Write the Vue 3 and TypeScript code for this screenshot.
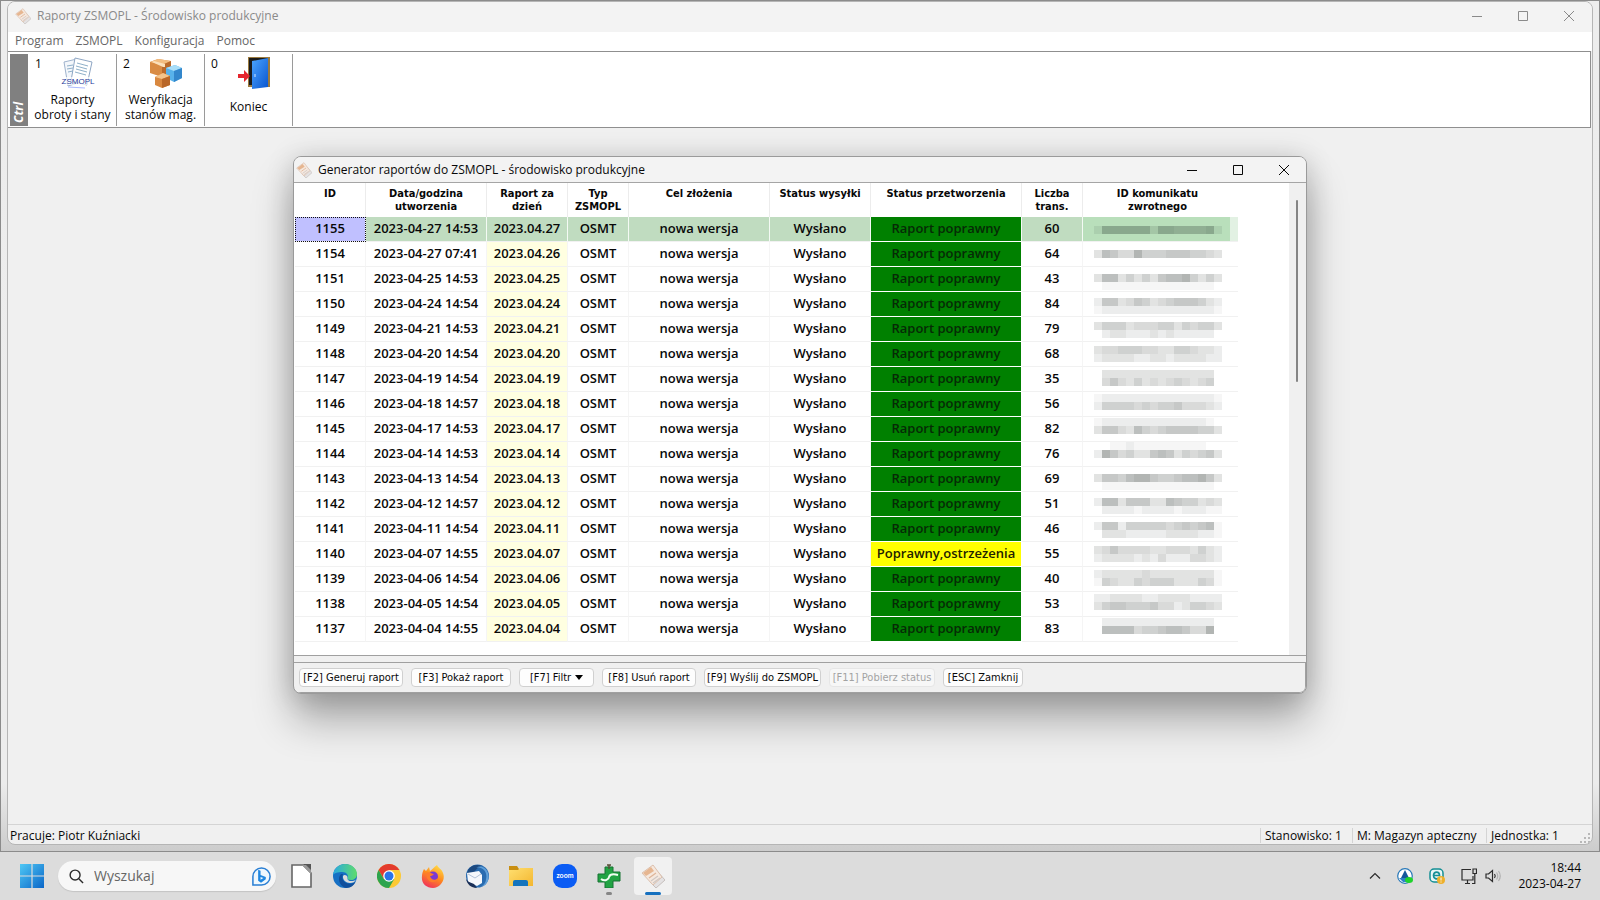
<script setup lang="ts">
interface Report {
  id: number
  created: string
  day: string
  count: number
  warning?: boolean
}

const reports: Report[] = [
  { id: 1155, created: '2023-04-27 14:53', day: '2023.04.27', count: 60 },
  { id: 1154, created: '2023-04-27 07:41', day: '2023.04.26', count: 64 },
  { id: 1151, created: '2023-04-25 14:53', day: '2023.04.25', count: 43 },
  { id: 1150, created: '2023-04-24 14:54', day: '2023.04.24', count: 84 },
  { id: 1149, created: '2023-04-21 14:53', day: '2023.04.21', count: 79 },
  { id: 1148, created: '2023-04-20 14:54', day: '2023.04.20', count: 68 },
  { id: 1147, created: '2023-04-19 14:54', day: '2023.04.19', count: 35 },
  { id: 1146, created: '2023-04-18 14:57', day: '2023.04.18', count: 56 },
  { id: 1145, created: '2023-04-17 14:53', day: '2023.04.17', count: 82 },
  { id: 1144, created: '2023-04-14 14:53', day: '2023.04.14', count: 76 },
  { id: 1143, created: '2023-04-13 14:54', day: '2023.04.13', count: 69 },
  { id: 1142, created: '2023-04-12 14:57', day: '2023.04.12', count: 51 },
  { id: 1141, created: '2023-04-11 14:54', day: '2023.04.11', count: 46 },
  { id: 1140, created: '2023-04-07 14:55', day: '2023.04.07', count: 55, warning: true },
  { id: 1139, created: '2023-04-06 14:54', day: '2023.04.06', count: 40 },
  { id: 1138, created: '2023-04-05 14:54', day: '2023.04.05', count: 53 },
  { id: 1137, created: '2023-04-04 14:55', day: '2023.04.04', count: 83 },
]

const columns: { label: string; cls: string }[] = [
  { label: 'ID', cls: 'c-id' },
  { label: 'Data/godzina utworzenia', cls: 'c-created' },
  { label: 'Raport za dzień', cls: 'c-day' },
  { label: 'Typ ZSMOPL', cls: 'c-type' },
  { label: 'Cel złożenia', cls: 'c-purpose' },
  { label: 'Status wysyłki', cls: 'c-sent' },
  { label: 'Status przetworzenia', cls: 'c-status' },
  { label: 'Liczba trans.', cls: 'c-count' },
  { label: 'ID komunikatu zwrotnego', cls: 'c-msg' },
]

// Masked message numbers: line index on an 8px grid and one darkness digit per block.
const mask: [number, string][] = [
  [1, '2777777377666672'],
  [4, '3764485556665543'],
  [7, '3773535367785353'], [8, '0111111111111110'],
  [10, '2663465345666532'], [11, '1222222222222221'],
  [13, '3555344455354553'], [14, '0233222323222220'],
  [16, '3445554433554332'], [17, '2333322332333322'],
  [19, '0333333333333330'], [20, '0464353434543450'],
  [22, '1222222222222221'], [23, '2555545455644432'],
  [25, '1222222222222210'], [26, '3664375456666553'],
  [28, '0011211111111100'], [29, '2864533676354563'],
  [32, '3665788655677863'], [33, '0111111111111110'],
  [35, '2773666337655343'], [36, '0222212222122211'],
  [38, '2662555554565671'], [39, '0333222223333221'],
  [41, '3464444334443532'], [42, '2333323242224432'],
  [44, '2333334333333331'], [45, '1543354555333541'],
  [47, '2233332233332222'], [48, '3566555644235543'],
  [50, '0222222222222220'], [51, '0777745567764480'],
]

const blocks = mask.flatMap(([line, digits]) =>
  digits.split('').map((d, i) => ({ x: i * 8, y: line * 8, alpha: parseInt(d, 16) * 0.04 })),
)

const actions: { label: string; cls: string; disabled?: boolean; arrow?: boolean }[] = [
  { label: '[F2] Generuj raport', cls: 'w-f2' },
  { label: '[F3] Pokaż raport', cls: 'w-f3' },
  { label: '[F7] Filtr', cls: 'w-f7', arrow: true },
  { label: '[F8] Usuń raport', cls: 'w-f8' },
  { label: '[F9] Wyślij do ZSMOPL', cls: 'w-f9' },
  { label: '[F11] Pobierz status', cls: 'w-f11', disabled: true },
  { label: '[ESC] Zamknij', cls: 'w-esc' },
]
</script>

<template>
  <div class="screen">
    <svg class="defs" width="0" height="0" aria-hidden="true">
      <defs>
        <linearGradient id="gWin" x1="0" y1="0" x2="1" y2="1">
          <stop offset="0" stop-color="#4fc8f5" /><stop offset="1" stop-color="#0a66c8" />
        </linearGradient>
        <linearGradient id="gDoor" x1="0" y1="0" x2="1" y2="1">
          <stop offset="0" stop-color="#4aa4ff" /><stop offset="1" stop-color="#0a55cf" />
        </linearGradient>
        <linearGradient id="gEdge" x1="0" y1="0" x2="1" y2="0">
          <stop offset="0" stop-color="#2aa9e0" /><stop offset="1" stop-color="#5fdc6c" />
        </linearGradient>
        <linearGradient id="gFox" x1="0.8" y1="0" x2="0.3" y2="1">
          <stop offset="0" stop-color="#ffe14a" /><stop offset="0.5" stop-color="#ff8a1e" /><stop offset="1" stop-color="#f0315c" />
        </linearGradient>
        <linearGradient id="gFolder" x1="0" y1="0" x2="1" y2="1">
          <stop offset="0" stop-color="#ffdf70" /><stop offset="1" stop-color="#f3b62f" />
        </linearGradient>
        <symbol id="app-icon" viewBox="0 0 24 24">
          <path d="M15 6L24 16L15 24L9 18Z" fill="#e4e2e3" stroke="#c6bfbd" />
          <path d="M1 9L12 1L21 13L12 21Z" fill="#f5e8de" stroke="#dcc0ad" />
          <path d="M2 9L10 3L13 7L5 12Z" fill="#e6b691" />
          <path d="M8 14L15 9" stroke="#dfb497" stroke-width="1.2" />
          <path d="M10 17L17 12M12 19L19 14" stroke="#cfc7c4" stroke-width="1.2" />
        </symbol>
      </defs>
    </svg>

    <div class="desktop">
      <main class="main-window">
        <header class="titlebar inactive">
          <svg class="title-icon"><use href="#app-icon" /></svg>
          <h1>Raporty ZSMOPL - Środowisko produkcyjne</h1>
          <div class="win-controls">
            <button type="button" aria-label="Minimalizuj"><svg viewBox="0 0 12 12"><path d="M1 6.5H11" /></svg></button>
            <button type="button" aria-label="Maksymalizuj"><svg viewBox="0 0 12 12"><path d="M1.5 1.5H10.5V10.5H1.5Z" /></svg></button>
            <button type="button" aria-label="Zamknij"><svg viewBox="0 0 12 12"><path d="M1 1L11 11M11 1L1 11" /></svg></button>
          </div>
        </header>
        <nav class="menu">
          <button type="button">Program</button>
          <button type="button">ZSMOPL</button>
          <button type="button">Konfiguracja</button>
          <button type="button">Pomoc</button>
        </nav>
        <div class="toolbar">
          <div class="ctrl"><span>Ctrl</span></div>
          <button type="button" class="tool">
            <span class="num">1</span>
            <svg viewBox="0 0 32 32">
              <path d="M2 5L15 2L19 25L6 29Z" fill="#f4f7fb" stroke="#9fb3cd" />
              <path d="M13 1L30 5L25 28L9 24Z" fill="#fff" stroke="#8ea6c4" />
              <path d="M15 6L26 9M14 9L25 12M14 12L25 15M13 15L24 18M5 9L11 8M5 12L11 11M6 15L11 14" stroke="#8fb0c9" fill="none" />
              <path d="M0 20H32V28H0Z" fill="#fff" fill-opacity="0.7" />
              <text x="16" y="27" text-anchor="middle" class="icon-text">ZSMOPL</text>
              <path d="M6 30L23 31" stroke="#aab9ff" />
            </svg>
            <span class="caption">Raporty<br />obroty i stany</span>
          </button>
          <button type="button" class="tool">
            <span class="num">2</span>
            <svg viewBox="0 0 34 32">
              <path d="M1 5L9 2L22 4L22 17L13 20L1 16Z" fill="#d98b43" />
              <path d="M1 5L9 2L22 4L13 8Z" fill="#f2bd81" />
              <path d="M13 8L22 4V17L13 20Z" fill="#b96a2c" />
              <path d="M5 4L16 7L16 10L14 10L3 5Z" fill="#fbe0bb" />
              <path d="M17 11L26 8L33 11L33 21L25 25L17 21Z" fill="#58b2ea" />
              <path d="M17 11L26 8L33 11L25 14Z" fill="#a9def8" />
              <path d="M25 14L33 11V21L25 25Z" fill="#3387cc" />
              <path d="M6 20L14 16L21 19L21 28L13 31L6 28Z" fill="#d98840" />
              <path d="M6 20L14 16L21 19L13 22Z" fill="#f4c48b" />
              <path d="M13 22L21 19V28L13 31Z" fill="#b96729" />
            </svg>
            <span class="caption">Weryfikacja<br />stanów mag.</span>
          </button>
          <button type="button" class="tool exit">
            <span class="num">0</span>
            <svg viewBox="0 0 32 32">
              <path d="M10 0H32V30H27V3H14V30H10Z" fill="#9b7a3e" />
              <path d="M11 1H30V28H11Z" fill="#1b1b1b" />
              <path d="M14 4L30 1V30L14 32Z" fill="url(#gDoor)" />
              <path d="M17 17L17 20" stroke="#cfe5ff" />
              <path d="M0 17H6V13L12 19L6 25V21H0Z" fill="#e5252d" />
            </svg>
            <span class="caption">Koniec</span>
          </button>
        </div>
        <div class="workspace"></div>
        <footer class="statusbar">
          <span class="user">Pracuje: Piotr Kuźniacki</span>
          <span class="cell s1">Stanowisko: 1</span>
          <span class="cell s2">M: Magazyn apteczny</span>
          <span class="cell s3">Jednostka: 1</span>
          <svg class="grip" viewBox="0 0 12 12"><path d="M8 1h2v2H8zM8 5h2v2H8zM8 9h2v2H8zM4 5h2v2H4zM4 9h2v2H4zM0 9h2v2H0z" /></svg>
        </footer>
      </main>

      <section class="dialog" role="dialog" aria-labelledby="dlg-title">
        <header class="titlebar">
          <svg class="title-icon"><use href="#app-icon" /></svg>
          <h2 id="dlg-title">Generator raportów do ZSMOPL - środowisko produkcyjne</h2>
          <div class="win-controls">
            <button type="button" aria-label="Minimalizuj"><svg viewBox="0 0 12 12"><path d="M1 6.5H11" /></svg></button>
            <button type="button" aria-label="Maksymalizuj"><svg viewBox="0 0 12 12"><path d="M1.5 1.5H10.5V10.5H1.5Z" /></svg></button>
            <button type="button" aria-label="Zamknij"><svg viewBox="0 0 12 12"><path d="M1 1L11 11M11 1L1 11" /></svg></button>
          </div>
        </header>
        <div class="grid-area">
          <div class="table-wrap">
            <table>
              <thead>
                <tr>
                  <th v-for="c in columns" :key="c.cls" :class="c.cls" scope="col">{{ c.label }}</th>
                </tr>
              </thead>
              <tbody>
                <tr v-for="(r, i) in reports" :key="r.id" :class="{ current: i === 0 }">
                  <td class="c-id">{{ r.id }}</td>
                  <td>{{ r.created }}</td>
                  <td class="c-day">{{ r.day }}</td>
                  <td>OSMT</td>
                  <td>nowa wersja</td>
                  <td>Wysłano</td>
                  <td class="c-status" :class="{ warn: r.warning }">{{ r.warning ? 'Poprawny,ostrzeżenia' : 'Raport poprawny' }}</td>
                  <td>{{ r.count }}</td>
                  <td class="c-msg"></td>
                </tr>
              </tbody>
            </table>
            <svg class="mask" viewBox="0 0 128 424" shape-rendering="crispEdges" aria-hidden="true">
              <rect v-for="(b, i) in blocks" :key="i" :x="b.x" :y="b.y" width="8" height="8" fill="#101814" :fill-opacity="b.alpha" />
            </svg>
          </div>
          <div class="scroll"><span></span></div>
        </div>
        <div class="actions">
          <button v-for="a in actions" :key="a.cls" type="button" :class="a.cls" :disabled="a.disabled">
            {{ a.label }}<svg v-if="a.arrow" viewBox="0 0 8 5"><path d="M0 0H8L4 5Z" /></svg>
          </button>
        </div>
      </section>
    </div>

    <footer class="taskbar">
      <button type="button" class="start" aria-label="Start">
        <svg viewBox="0 0 24 24"><path d="M0 0H11.4V11.4H0ZM12.6 0H24V11.4H12.6ZM0 12.6H11.4V24H0ZM12.6 12.6H24V24H12.6Z" fill="url(#gWin)" /></svg>
      </button>
      <label class="search">
        <svg class="lens" viewBox="0 0 16 16"><circle cx="6.5" cy="6.5" r="5.3" /><path d="M10.5 10.5L15 15" /></svg>
        <input type="text" placeholder="Wyszukaj" aria-label="Wyszukaj" />
        <svg class="bing" viewBox="0 0 22 22">
          <path d="M2 20V11A9 9 0 1 1 11 20Z" fill="#eef7fd" stroke="#2a7fd4" stroke-width="1.6" />
          <path d="M7.500 4L10 5V9.500L15.500 11.500V14L10.500 17.500L7.500 15.500ZM10 11.500V14.500L13 12.700Z" fill="#1e86e0" fill-rule="evenodd" />
        </svg>
      </label>
      <div class="apps">
        <button type="button" aria-label="LibreOffice">
          <svg viewBox="0 0 24 24"><path d="M3 1H14L22 9V23H3Z" fill="#fff" stroke="#666" stroke-width="1.6" /><path d="M14 0H22V8Z" fill="#555" /><path d="M13 1L22 10V6L17 1Z" fill="#999" /></svg>
        </button>
        <button type="button" aria-label="Microsoft Edge">
          <svg viewBox="0 0 24 24">
            <circle cx="12" cy="12" r="12" fill="#1670c4" />
            <path d="M0 11C1 4 6 0 12 0C19 0 24 5 24 10C24 14 21 16 18 16C15 16 14 15 14.500 14C16 11 13 8 9.500 8C5 8 1 9 0 11Z" fill="url(#gEdge)" />
            <path d="M8 10C4 14 6 22 13 24C18 24 21 21 22.500 18C18 21 12 20 10 16C9 14 9 12 10 10Z" fill="#114f9c" />
            <path d="M10 12C11 10 14 11 14.500 13C14 15 15 17 18 17C20 17 22 16.500 23 15.500C22 18 20 19 17 19C13 19 9.500 16 10 12Z" fill="#dcdcdc" />
          </svg>
        </button>
        <button type="button" aria-label="Google Chrome">
          <svg viewBox="0 0 24 24">
            <circle cx="12" cy="12" r="12" fill="#fcc934" />
            <path d="M1.600 6A12 12 0 0 1 22.400 6H12L6.800 15Z" fill="#e33b2e" />
            <path d="M1.600 6A12 12 0 0 0 12 24L17.200 15H6.800Z" fill="#2da44e" />
            <circle cx="12" cy="12" r="5.800" fill="#fff" /><circle cx="12" cy="12" r="4.500" fill="#2a74e8" />
          </svg>
        </button>
        <button type="button" aria-label="Firefox">
          <svg viewBox="0 0 24 24">
            <path d="M3 5L5 7L8 3L9 7C12 5 13 3 16 1C17 4 21 5 22 9C25 16 19 24 12 24C5 24 0 19 1 12C1 9 2 7 3 5Z" fill="url(#gFox)" />
            <circle cx="12" cy="12.500" r="5" fill="#7a3ad4" />
            <path d="M5 9C8 7 10 10 13 10C11 12 10 12 9 12C10 16 14 17 17 14C17 19 8 20 6 14Z" fill="#ff7b2a" />
          </svg>
        </button>
        <button type="button" aria-label="Thunderbird">
          <svg viewBox="0 0 24 24">
            <circle cx="12.500" cy="12" r="11.500" fill="#2a6cb0" />
            <path d="M3 6C6 1 12 0 17 2C13 3 11 5 9 9L2 11Z" fill="#1d4a80" />
            <path d="M11 4C17 2 23 8 21 15C21 19 18 22 15 23C22 22 25 15 23 9C21 3 15 1 11 4Z" fill="#5f9fd8" />
            <path d="M2 9L14 7L17 11V19L12 22L3 18Z" fill="#f5f8fc" />
            <path d="M3 10L10 14L16 10" fill="none" stroke="#b3c3d9" />
            <path d="M1 15L4 18L9 20L12 24C6 24 2 20 1 15Z" fill="#1a2f57" />
          </svg>
        </button>
        <button type="button" aria-label="Eksplorator plików">
          <svg viewBox="0 0 24 24">
            <path d="M0 2H8L10 5V10H0Z" fill="#c98f12" /><path d="M0 6H9L11 4H24V22H0Z" fill="url(#gFolder)" />
            <path d="M4 18Q4 16 6 16H17Q19 16 19 18V22H4Z" fill="#1474bd" />
          </svg>
        </button>
        <button type="button" aria-label="Zoom">
          <svg viewBox="0 0 24 24"><rect width="24" height="24" rx="9" fill="#0b5cf4" /><text x="12" y="14" text-anchor="middle" class="zoom-text">zoom</text></svg>
        </button>
        <button type="button" class="running" aria-label="Apteka">
          <svg viewBox="0 0 24 24">
            <path d="M8 3H16V8H23V17H16V24H8V18H1V10H8Z" fill="#21a343" stroke="#167332" />
            <path d="M4 15C8 18 12 15 12 13C13 10 17 10 21 11" fill="none" stroke="#f1fff2" stroke-width="2" />
            <path d="M10 1L14 1M12 1V5" stroke="#574c35" stroke-width="1.400" />
          </svg>
        </button>
        <button type="button" class="active" aria-label="Raporty ZSMOPL"><svg><use href="#app-icon" /></svg></button>
      </div>
      <div class="tray">
        <button type="button" class="chev" aria-label="Pokaż ukryte ikony"><svg viewBox="0 0 12 12"><path d="M1 8.500L6 3.500L11 8.500" /></svg></button>
        <svg class="t16" viewBox="0 0 16 16">
          <circle cx="8" cy="8" r="7.300" fill="#fff" stroke="#2878b8" stroke-width="1.200" />
          <path d="M8 2L12 10H4Z" fill="#15579b" /><path d="M2 10H13L10 14H6Z" fill="#2d83c5" /><ellipse cx="12" cy="12" rx="4" ry="3" fill="#1fd32c" />
        </svg>
        <svg class="t16" viewBox="0 0 16 16">
          <rect x="1" y="1" width="13" height="13" rx="4" fill="#e8f6f6" stroke="#148f94" stroke-width="1.500" />
          <path d="M4.500 7.500H10.500C10.500 3 4.500 3 4.500 7.500C4.500 11 8 11.500 10 10" fill="none" stroke="#148f94" stroke-width="1.700" />
          <circle cx="12" cy="12" r="4" fill="#eeb02b" /><path d="M12 9.500V12.500M12 13.500V14.500" stroke="#fff" />
        </svg>
        <svg class="net" viewBox="0 0 16 16"><path d="M10 1.500H1V12H12V8M4 15.500H9M6.500 12V15.500M12 1H15.500V5.500H12ZM13.800 5.500V15.500H11" /></svg>
        <svg class="vol" viewBox="0 0 16 16"><path d="M1 6H3.500L7.500 2.500V13.500L3.500 10H1Z" /><path d="M9.500 6Q11 8 9.500 10" /><path class="faint" d="M11.500 4.500Q14 8 11.500 11.500M13.500 3Q17 8 13.500 13" /></svg>
        <div class="clock"><time>18:44</time><time>2023-04-27</time></div>
      </div>
    </footer>
  </div>
</template>

<style>
body {
  margin: 0;
}
</style>

<style scoped>
* {
  box-sizing: border-box;
}
.screen {
  --ui: "Open Sans", "Noto Sans", sans-serif;
  height: 100vh;
  min-height: 800px;
  display: flex;
  flex-direction: column;
  font: 12px/15px var(--ui);
  color: #080808;
  overflow: hidden;
}
.defs {
  position: absolute;
}
button {
  font: inherit;
  color: inherit;
  border: 0;
  padding: 0;
  background: none;
}
h1,
h2 {
  margin: 0;
  font: inherit;
}
.desktop {
  flex: 1;
  position: relative;
  display: flex;
  background: linear-gradient(#ededed, #ececec 92%, #cccccc);
  border: 1px solid #8b8b8b;
  padding: 0 6px 6px;
}
.main-window {
  flex: 1;
  display: flex;
  flex-direction: column;
  background: #f0f0f0;
  border: 1px solid #b5b5b5;
  border-radius: 8px;
  overflow: hidden;
}
.titlebar {
  display: flex;
  align-items: center;
  height: 25px;
  padding-left: 2px;
  background: #f3f3f3;
}
.titlebar.inactive {
  height: 30px;
  padding: 0 0 3px 7px;
  color: #8a8a8a;
}
.title-icon {
  width: 16px;
  height: 16px;
  margin-right: 6px;
}
.titlebar h1,
.titlebar h2 {
  flex: 1;
}
.win-controls {
  display: flex;
}
.win-controls button {
  width: 46px;
  height: 24px;
  display: grid;
  place-items: center;
}
.dialog .win-controls {
  margin-right: -1px;
}
.win-controls svg {
  width: 12px;
  height: 12px;
  fill: none;
  stroke: currentColor;
}
.menu {
  display: flex;
  align-items: flex-start;
  gap: 12px;
  height: 19px;
  padding: 1px 0 0 7px;
  background: #fff;
  color: #666;
}
.toolbar {
  display: flex;
  height: 77px;
  background: #fff;
  border: 1px solid #8f8f8f;
  border-left: 0;
  padding: 2px 1px 1px 2px;
  margin-right: 1px;
}
.ctrl {
  width: 18px;
  margin-right: 1px;
  background: #808080;
  display: flex;
  align-items: flex-end;
  justify-content: center;
}
.ctrl span {
  writing-mode: vertical-rl;
  rotate: 180deg;
  color: #fff;
  font: italic bold 12px/16px var(--ui);
  padding-top: 3px;
}
.tool {
  width: 88px;
  display: grid;
  grid-template-columns: 26px 1fr;
  grid-template-rows: 36px auto;
  align-content: start;
  border-right: 1px solid #9a9a9a;
  padding-top: 2px;
}
.num {
  padding-left: 6px;
  text-align: left;
  line-height: 16px;
}
.tool svg {
  width: 34px;
  height: 32px;
  margin: 1px 0 0 6px;
}
.caption {
  grid-column: 1 / -1;
  text-align: center;
}
.exit .caption {
  padding-top: 7px;
}
.icon-text {
  font: 8px "Liberation Sans", sans-serif;
  fill: #283a9a;
}
.workspace {
  flex: 1;
}
.statusbar {
  display: flex;
  align-items: center;
  height: 20px;
  border-top: 1px solid #d4d4d4;
  padding: 2px 0 0 2px;
}
.user {
  flex: 1;
}
.cell {
  border-left: 1px solid #d4d4d4;
  padding-left: 4px;
}
.s1 {
  width: 92px;
}
.s2 {
  width: 134px;
}
.s3 {
  width: 94px;
}
.grip {
  width: 12px;
  height: 12px;
  fill: #b8b8b8;
  align-self: flex-end;
}
.dialog {
  position: absolute;
  left: 292px;
  right: 292px;
  top: 155px;
  background: #f0f0f0;
  border: 1px solid #9a9a9a;
  border-radius: 8px;
  overflow: hidden;
  box-shadow: 0 26px 40px rgba(0, 0, 0, 0.3), 0 2px 28px rgba(0, 0, 0, 0.16);
}
.grid-area {
  display: flex;
  background: #fff;
  border-top: 1px solid #a5a5a5;
  border-bottom: 1px solid #a0a0a0;
}
.table-wrap {
  position: relative;
  flex: 1;
  padding: 0 0 13px 1px;
}
table {
  border-collapse: separate;
  border-spacing: 0;
  table-layout: fixed;
  width: 943px;
}
th {
  height: 34px;
  padding: 4px 6px 0;
  vertical-align: top;
  font: bold 11px/13px "DejaVu Sans Condensed", "DejaVu Sans", sans-serif;
  border-right: 1px solid #ececec;
}
td {
  height: 25px;
  padding: 0 0 2px;
  text-align: center;
  font: 600 13px/22px var(--ui);
  border-right: 1px solid #f5f5f5;
  border-bottom: 1px solid #f1f1f1;
}
.c-id {
  width: 71px;
}
.c-created {
  width: 121px;
}
.c-day {
  width: 81px;
}
.c-type {
  width: 61px;
}
.c-purpose {
  width: 141px;
}
.c-sent {
  width: 101px;
}
.c-status {
  width: 151px;
}
.c-count {
  width: 61px;
}
th.c-sent,
th.c-type {
  padding-left: 0;
  padding-right: 0;
}
th.c-msg,
td.c-msg {
  border-right: 0;
}
th.c-msg {
  padding-right: 12px;
}
td.c-day {
  background: #ffffe1;
}
td.c-status {
  background: #008000;
  color: #062a06;
  border-color: #fff;
}
td.c-status.warn {
  background: #ffff00;
  color: #222200;
}
.current td {
  background: #c0dcc0;
  border-right-color: #f4faf4;
}
.current td.c-id {
  background: #c0c0ff;
  outline: 1px dotted #111;
  outline-offset: -1px;
}
.current td.c-status {
  background: #008000;
}
.current td.c-msg {
  background: linear-gradient(to right, #b9dfbb calc(100% - 8px), #e2f1e3 calc(100% - 8px));
}
.mask {
  position: absolute;
  left: 800px;
  top: 35px;
  width: 128px;
  height: 424px;
}
.scroll {
  width: 17px;
  background: #f0f0f0;
  padding: 17px 8px 0 7px;
}
.scroll span {
  display: block;
  width: 2px;
  height: 182px;
  background: #858585;
  border-radius: 1px;
}
.actions {
  display: flex;
  gap: 8px;
  margin-top: 6px;
  padding: 5px;
  border: 1px solid #a0a0a0;
  border-left: 0;
  border-radius: 0 0 6px 0;
}
.actions button {
  display: flex;
  align-items: center;
  justify-content: center;
  gap: 4px;
  height: 19px;
  background: #fdfdfd;
  border: 1px solid #d0d0d0;
  border-radius: 4px;
  font: 11px/15px "DejaVu Sans Condensed", "DejaVu Sans", sans-serif;
  white-space: nowrap;
}
.actions button:disabled {
  color: #a3a3a3;
  background: #f7f7f7;
  border-color: #e6e6e6;
}
.actions svg {
  width: 8px;
  height: 5px;
}
.w-f2 {
  width: 104px;
}
.w-f3 {
  width: 100px;
}
.w-f7 {
  width: 75px;
}
.w-f8 {
  width: 94px;
}
.w-f9 {
  width: 117px;
}
.w-f11 {
  width: 106px;
}
.w-esc {
  width: 80px;
}
.taskbar {
  display: flex;
  align-items: center;
  height: 48px;
  background: #dcdcdc;
  padding: 0 19px 0 20px;
}
.taskbar svg {
  display: block;
}
.start svg {
  width: 24px;
  height: 24px;
}
.search {
  display: flex;
  align-items: center;
  width: 218px;
  height: 30px;
  margin-left: 14px;
  padding: 0 4px 0 11px;
  border-radius: 15px;
  background: #f7f7f7;
  box-shadow: 0 1px 1px #c4c4c4;
}
.lens {
  width: 15px;
  height: 15px;
  fill: none;
  stroke: #2b2b2b;
  stroke-width: 1.5;
}
.search input {
  flex: 1;
  min-width: 0;
  border: 0;
  background: none;
  padding: 0 0 0 10px;
  font: 14px/20px var(--ui);
}
.search input::placeholder {
  color: #666;
  opacity: 1;
}
.bing {
  width: 21px;
  height: 21px;
}
.apps {
  display: flex;
  gap: 6px;
  margin-left: 6px;
}
.apps button {
  position: relative;
  width: 38px;
  height: 38px;
  display: grid;
  place-items: center;
  border-radius: 4px;
}
.apps svg {
  width: 24px;
  height: 24px;
}
.apps .active {
  background: #f1f1f1;
}
.apps .active::after,
.apps .running::after {
  content: "";
  position: absolute;
  bottom: 0;
  width: 16px;
  height: 3px;
  border-radius: 2px;
  background: #1670bf;
}
.apps .running::after {
  width: 6px;
  background: #868686;
}
.zoom-text {
  font: bold 7px Lato, sans-serif;
  fill: #fff;
}
.tray {
  display: flex;
  align-items: center;
  margin-left: auto;
}
.chev svg {
  width: 12px;
  height: 12px;
}
.chev path,
.net,
.vol {
  fill: none;
  stroke: #2b2b2b;
  stroke-width: 1.2;
}
.t16,
.net,
.vol {
  width: 16px;
  height: 16px;
}
.chev,
.t16 {
  margin-right: 16px;
}
.t16 + .net {
  margin-right: 8px;
}
.faint {
  stroke: #b0b0b0;
}
.clock {
  width: 80px;
  display: flex;
  flex-direction: column;
  align-items: flex-end;
  line-height: 16px;
}
</style>
